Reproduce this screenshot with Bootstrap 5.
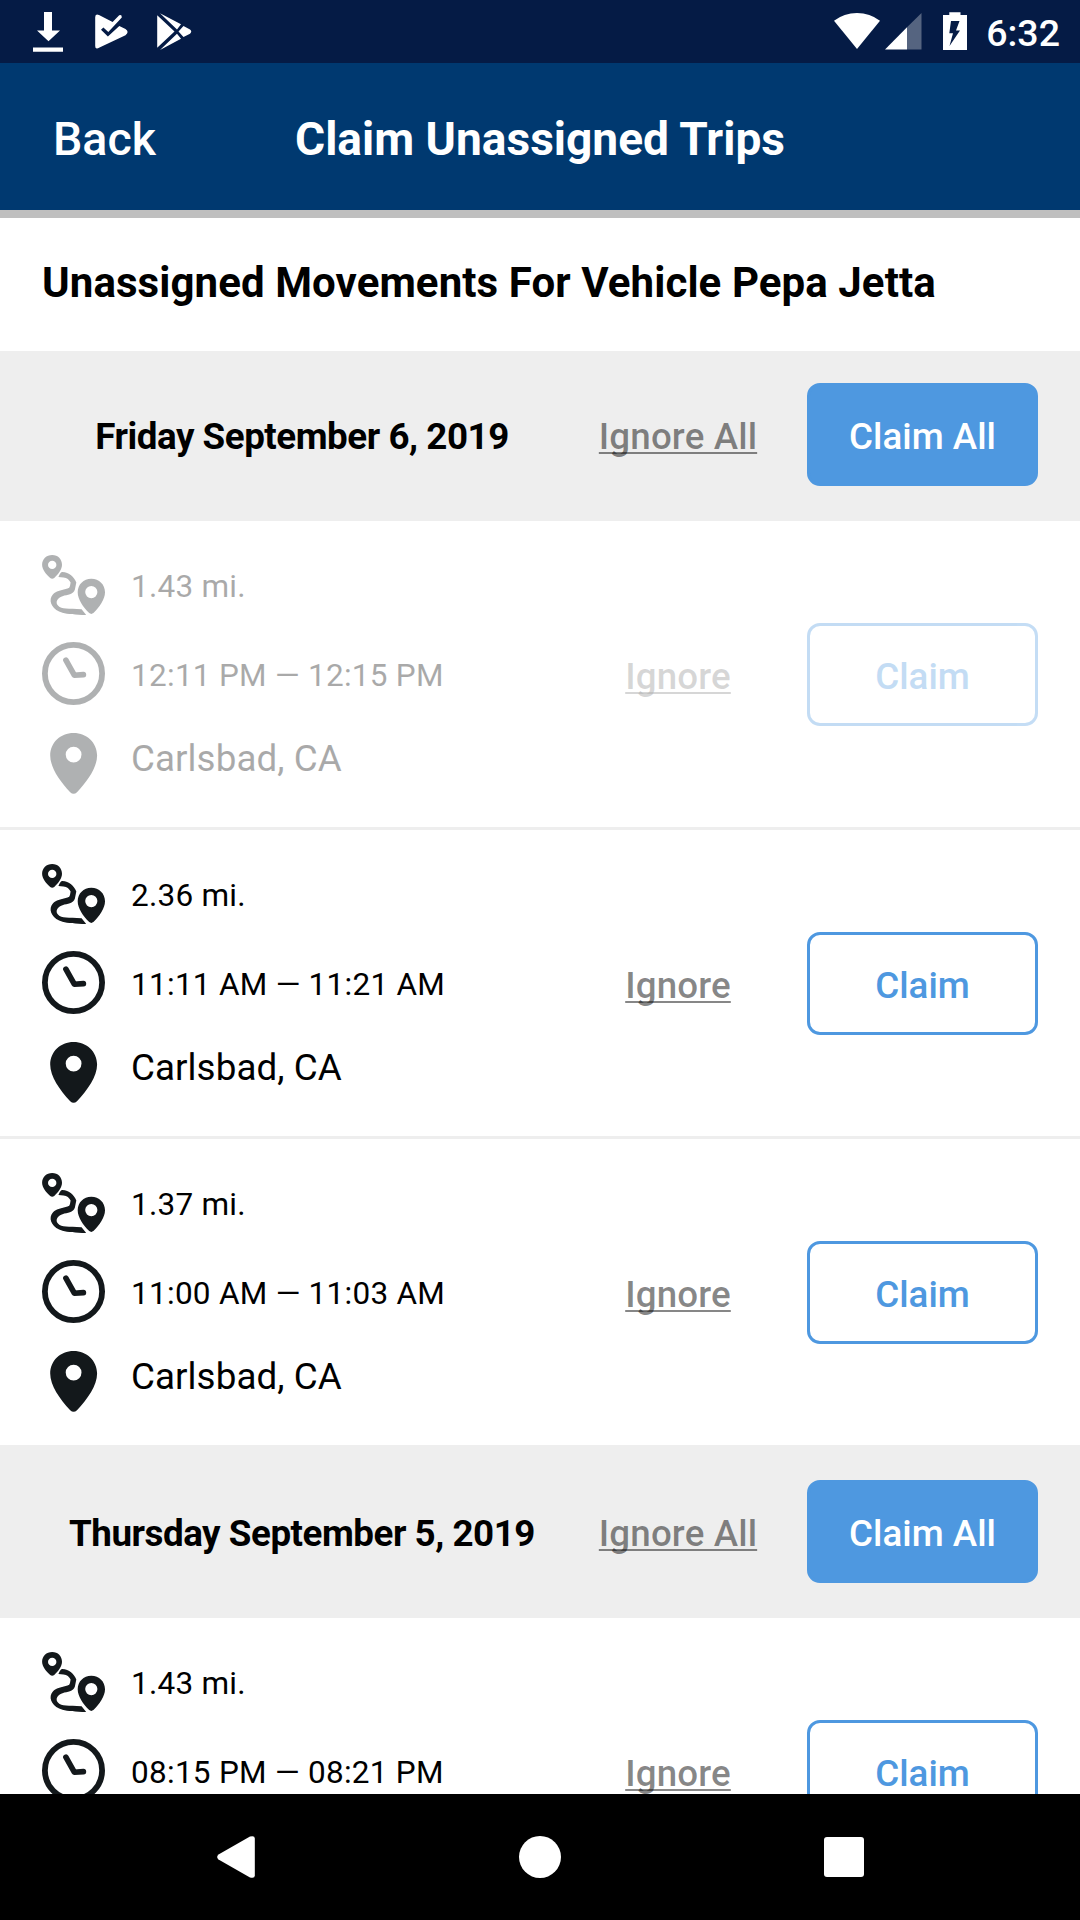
<!DOCTYPE html>
<html lang="en">
<head>
<meta charset="utf-8">
<meta name="viewport" content="width=device-width, initial-scale=1">
<title>Claim Unassigned Trips</title>
<link href="https://cdn.jsdelivr.net/npm/bootstrap@5.3.0/dist/css/bootstrap.min.css" rel="stylesheet">
<style>
  body { font-family: Roboto, "Noto Sans", sans-serif; color: #000; background: #fff; font-size: 36.75px; line-height: 44px; }
  svg { display: block; flex: none; }
  .status-bar { height: 63px; background: #051b45; padding: 0 20px 0 33px; }
  .clock-text { font-size: 37.5px; font-weight: 500; line-height: 40px; padding-top: 3px; margin-left: 18px; }
  .app-bar { height: 155px; background: #003970; border-bottom: 8px solid #bfbfbf; font-size: 46.5px; padding: 4px 53px 0; }
  .app-side { flex: 1 1 0; font-weight: 500; padding-top: 1px; }
  .app-title { font-size: 46.1px; font-weight: 700; line-height: 56px; }
  .page-title { height: 133px; font-size: 42px; font-weight: 700; line-height: 50px; letter-spacing: .085px; padding: 0 42px 3px; margin: 0; }
  .day-head, .trip { border-bottom: 3px solid #eee; padding: 0 42px; }
  .day-head { background: #eee; padding-top: 32px; padding-bottom: 32px; }
  .after-trips { padding-top: 35px; }
  .day-name, .details { width: 520px; }
  .day-name { font-weight: 700; text-align: center; padding-top: 4px; letter-spacing: -.46px; }
  .ignore-col { width: 232px; padding-top: 4px; margin-right: 13px; }
  .ignore-link { color: rgba(0,0,0,.47); font-weight: 500; letter-spacing: .12px; text-decoration: underline; text-decoration-skip-ink: none; text-decoration-thickness: 2px; text-underline-offset: 3px; }
  .ignore-link:hover { color: rgba(0,0,0,.6); }
  .btn-claim { --bs-btn-font-size: 36.75px; --bs-btn-font-weight: 500; --bs-btn-line-height: 44px; --bs-btn-border-width: 3px; --bs-btn-border-radius: 13px; --bs-btn-border-color: #4e98e0; --bs-btn-color: #4e98e0; --bs-btn-hover-color: #fff; --bs-btn-hover-bg: #4e98e0; --bs-btn-hover-border-color: #4e98e0; width: 231px; height: 103px; padding: 4px 0 0; }
  .btn-claim-all { --bs-btn-color: #fff; --bs-btn-bg: #4e98e0; }
  .trip .ignore-col, .trip .btn-claim { padding-top: 6px; }
  .details { padding: 34px 0 33px; color: #000; }
  .line { gap: 26px; }
  .line svg { color: #13181b; }
  .line-distance { height: 60px; margin-bottom: 27px; font-size: 31.5px; letter-spacing: .25px; }
  .line-distance span { padding-top: 4px; }
  .line-time { height: 63px; margin-bottom: 28px; font-size: 31.5px; letter-spacing: .28px; }
  .line-time span { padding-top: 5px; }
  .line-place { height: 61px; letter-spacing: .08px; }
  .line-place span { padding-bottom: 10px; }
  .claimed > * { opacity: .333; }
  .nav-keys { height: 126px; padding: 0 215px; }
</style>
<script src="https://cdn.jsdelivr.net/npm/bootstrap@5.3.0/dist/js/bootstrap.bundle.min.js"></script>
</head>
<body>
<svg class="d-none" aria-hidden="true">
  <symbol id="route" viewBox="0 0 63 60">
    <path fill="currentColor" fill-rule="evenodd" d="M10.2 0C4.4 0 .1 4.2.1 9.8c0 4.4 4 9.7 8.1 13.2q2 1.4 4 0C16.200 19.500 20 14.200 20 9.800 20 4.200 16 0 10.200 0ZM10.200 5.700a4.200 4.200 0 1 1 0 8.400a4.200 4.200 0 1 1 0-8.400Z"/>
    <path fill="currentColor" fill-rule="evenodd" d="M49.300 23.800c-7.800 0-13.600 5.900-13.600 13.400 0 7 5.400 14.700 11.500 20.900q2.100 1.600 4.200 0C57.500 51.900 63 44.200 63 37.200c0-7.500-5.800-13.400-13.700-13.400ZM49.300 31a6.100 6.100 0 1 1 0 12.200a6.100 6.100 0 1 1 0-12.200Z"/>
    <path fill="currentColor" d="M16.400 21.900Q18.500 17 20.200 17C27.500 17.500 31.800 21.500 34.300 27.500L32.900 34.500C31.300 40 25.500 39.400 20.500 41.200C15 43 13 47.500 16.200 50.800C19.500 54.400 26 53.600 39.600 54.200L44.200 60C33 59.700 26 59.300 20.500 57.700C11 55.300 6.500 47.500 9.500 41.600C11.600 37.500 15 36.100 20 34.900L25.500 33.500Q27.600 32.900 28 30.900L28.600 27.600Q26.700 23 21.500 22.400Z"/>
  </symbol>
  <symbol id="clock" viewBox="0 0 63 63">
    <circle cx="31.500" cy="31.500" r="28.600" fill="none" stroke="currentColor" stroke-width="5.800"/>
    <path fill="none" stroke="currentColor" stroke-width="5.600" stroke-linecap="round" stroke-linejoin="round" d="M23.900 18.200 32.300 33.200 41.400 32.600"/>
  </symbol>
  <symbol id="pin" viewBox="0 0 63 61">
    <path fill="currentColor" fill-rule="evenodd" d="M31.600 0C18.300 0 8.200 9.900 8.200 22.500c0 11.900 9.500 25.600 20 36.700q3.400 3.200 6.800 0c10.500-11.100 20.100-24.800 20.100-36.700C55.100 9.900 44.900 0 31.600 0ZM31.600 13.700a7.900 7.900 0 1 1 0 15.800a7.900 7.900 0 1 1 0-15.800Z"/>
  </symbol>
</svg>

<div class="vh-100 d-flex flex-column overflow-hidden">
  <div class="status-bar flex-shrink-0 d-flex align-items-center text-white">
    <svg width="160" height="63" viewBox="33 0 160 63" fill="#fff">
      <path d="M44 12h8v18.500h8L48.500 41.300 37 30.500h7ZM33 47.500h30V51.800H33Z"/>
      <path d="M95.200 17.200Q95.200 13.200 99 15l13.600 6.900 6.600-6.600q2.700-1 2.600 2.200L108.300 32 103.400 27.400 101 29.700 107.900 36.400 119.300 26 125.500 29q4.200 3 0 6.200L99.500 47.600Q95.200 50 95.200 46Z"/>
      <path d="M157.200 15.300 174.500 31.500 157.200 47.800ZM160 13.200 181 24.300 177 29.500ZM160 50 177 33.800 181 38.700ZM183.500 26 190 29.500q2.500 2 0 4.200L183.500 37 178.500 31.600Z"/>
    </svg>
    <svg class="ms-auto" width="134" height="63" viewBox="834 0 134 63" fill="#fff">
      <path d="M857 49 834 20.800Q844 13 857 13T880 20.800Z"/>
      <path opacity=".32" d="M907 27.300 921.500 13V49.500H907Z"/>
      <path d="M885 49.500 907 27.300V49.500Z"/>
      <path fill-rule="evenodd" d="M949.300 12.200H960.500V15H967V50H943V15h6.300ZM951 21 949.300 33.300H953L949.500 46 960 30.500H956L959.500 21Z"/>
    </svg>
    <div class="clock-text">6:32</div>
  </div>

  <header class="app-bar flex-shrink-0 d-flex align-items-center text-white">
    <a href="#" class="app-side text-white text-decoration-none">Back</a>
    <h1 class="app-title mb-0">Claim Unassigned Trips</h1>
    <div class="app-side"></div>
  </header>

  <main class="flex-grow-1 overflow-hidden" style="min-height:0">
    <h2 class="page-title d-flex align-items-center">Unassigned Movements For Vehicle Pepa Jetta</h2>

    <div class="day-head d-flex align-items-center">
      <div class="day-name">Friday September 6, 2019</div>
      <div class="ignore-col text-center"><a class="ignore-link" href="#">Ignore All</a></div>
      <button class="btn btn-claim btn-claim-all">Claim All</button>
    </div>

    <div class="trip claimed d-flex align-items-center">
      <div class="details">
        <div class="line line-distance d-flex align-items-center"><svg width="63" height="60"><use href="#route"/></svg><span>1.43 mi.</span></div>
        <div class="line line-time d-flex align-items-center"><svg width="63" height="63"><use href="#clock"/></svg><span>12:11 PM — 12:15 PM</span></div>
        <div class="line line-place d-flex align-items-center"><svg width="63" height="61"><use href="#pin"/></svg><span>Carlsbad, CA</span></div>
      </div>
      <div class="ignore-col text-center"><a class="ignore-link" href="#">Ignore</a></div>
      <button class="btn btn-claim">Claim</button>
    </div>

    <div class="trip d-flex align-items-center">
      <div class="details">
        <div class="line line-distance d-flex align-items-center"><svg width="63" height="60"><use href="#route"/></svg><span>2.36 mi.</span></div>
        <div class="line line-time d-flex align-items-center"><svg width="63" height="63"><use href="#clock"/></svg><span>11:11 AM — 11:21 AM</span></div>
        <div class="line line-place d-flex align-items-center"><svg width="63" height="61"><use href="#pin"/></svg><span>Carlsbad, CA</span></div>
      </div>
      <div class="ignore-col text-center"><a class="ignore-link" href="#">Ignore</a></div>
      <button class="btn btn-claim">Claim</button>
    </div>

    <div class="trip border-bottom-0 d-flex align-items-center">
      <div class="details">
        <div class="line line-distance d-flex align-items-center"><svg width="63" height="60"><use href="#route"/></svg><span>1.37 mi.</span></div>
        <div class="line line-time d-flex align-items-center"><svg width="63" height="63"><use href="#clock"/></svg><span>11:00 AM — 11:03 AM</span></div>
        <div class="line line-place d-flex align-items-center"><svg width="63" height="61"><use href="#pin"/></svg><span>Carlsbad, CA</span></div>
      </div>
      <div class="ignore-col text-center"><a class="ignore-link" href="#">Ignore</a></div>
      <button class="btn btn-claim">Claim</button>
    </div>

    <div class="day-head after-trips d-flex align-items-center">
      <div class="day-name">Thursday September 5, 2019</div>
      <div class="ignore-col text-center"><a class="ignore-link" href="#">Ignore All</a></div>
      <button class="btn btn-claim btn-claim-all">Claim All</button>
    </div>

    <div class="trip d-flex align-items-center">
      <div class="details">
        <div class="line line-distance d-flex align-items-center"><svg width="63" height="60"><use href="#route"/></svg><span>1.43 mi.</span></div>
        <div class="line line-time d-flex align-items-center"><svg width="63" height="63"><use href="#clock"/></svg><span>08:15 PM — 08:21 PM</span></div>
        <div class="line line-place d-flex align-items-center"><svg width="63" height="61"><use href="#pin"/></svg><span>Carlsbad, CA</span></div>
      </div>
      <div class="ignore-col text-center"><a class="ignore-link" href="#">Ignore</a></div>
      <button class="btn btn-claim">Claim</button>
    </div>
  </main>

  <nav class="nav-keys flex-shrink-0 bg-black d-flex align-items-center justify-content-between">
    <svg width="42" height="42" viewBox="215 1836 42 42" fill="#fff"><path d="M218.500 1854.500 250 1836.600q4.800-1.500 4.800 2V1875.400q0 3.500-4.800 2L218.500 1859.500q-2.700-2.500 0-5Z"/></svg>
    <svg width="42" height="42" fill="#fff"><circle cx="21" cy="21" r="21"/></svg>
    <svg width="42" height="42" fill="#fff"><rect x="1" y="1" width="40" height="40" rx="3"/></svg>
  </nav>
</div>
</body>
</html>
